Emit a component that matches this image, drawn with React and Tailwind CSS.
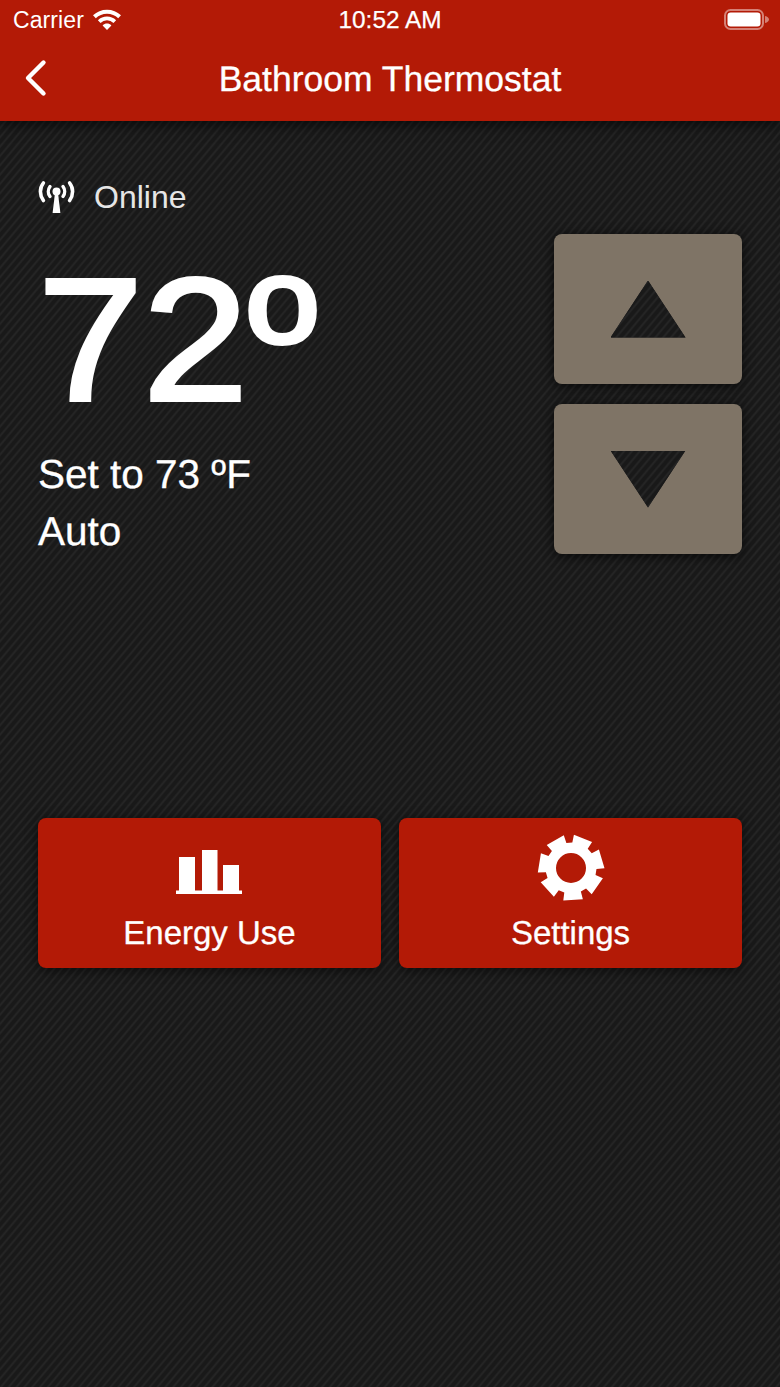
const RED = "bg-[#b31a06]";
const STRIPES = "bg-[#1c1c1c] bg-[repeating-linear-gradient(130deg,#191919_0px,#191919_2.5px,#252525_4px,#252525_4.5px,#191919_6px)]";

function gearPath() {
  const cx = 35, cy = 35, outer = 33.5, root = 25.5, hole = 15, teeth = 7, start = 22;
  const pts = [];
  const pt = (r, a) => {
    const t = ((a - 90) * Math.PI) / 180;
    return `${(cx + r * Math.cos(t)).toFixed(2)} ${(cy + r * Math.sin(t)).toFixed(2)}`;
  };
  for (let i = 0; i < teeth; i++) {
    const a = start + (i * 360) / teeth;
    pts.push(pt(root, a - 19), pt(outer, a - 17), pt(outer, a + 17), pt(root, a + 19));
  }
  const ring = `M${pts.join("L")}Z`;
  const h = `M${cx - hole} ${cy}a${hole} ${hole} 0 1 0 ${hole * 2} 0a${hole} ${hole} 0 1 0 ${-hole * 2} 0Z`;
  return ring + h;
}

function Wifi() {
  return (
    <svg width="28" height="22" viewBox="0 0 28 22" fill="none" className="block">
      <path d="M1.4 7.8C8.4 1 19.6 1 26.6 7.8" stroke="white" strokeWidth="4" />
      <path d="M6.2 12.6C10.6 8.4 17.4 8.4 21.8 12.6" stroke="white" strokeWidth="3.8" />
      <path d="M14 21L9.6 16.4C12.2 14 15.8 14 18.4 16.4Z" fill="white" />
    </svg>
  );
}

function Battery() {
  return (
    <svg width="46" height="22" viewBox="0 0 46 22" fill="none" className="block">
      <rect x="1" y="1" width="38" height="19" rx="5.5" stroke="white" strokeOpacity="0.45" strokeWidth="2" />
      <rect x="3.5" y="3.5" width="33" height="14" rx="3.2" fill="white" />
      <path d="M41 7C43.6 7.6 45 9 45 10.5C45 12 43.6 13.4 41 14Z" fill="white" fillOpacity="0.45" />
    </svg>
  );
}

function Antenna() {
  return (
    <svg width="40" height="34" viewBox="0 0 40 34" fill="none" className="block">
      <circle cx="19.5" cy="11.5" r="4" fill="white" />
      <path d="M18 13H21L23.4 33H15.6Z" fill="white" />
      <path d="M13 6.5C10.8 9.4 10.8 13.6 13 16.5" stroke="white" strokeWidth="3.4" strokeLinecap="round" />
      <path d="M26 6.5C28.2 9.4 28.2 13.6 26 16.5" stroke="white" strokeWidth="3.4" strokeLinecap="round" />
      <path d="M6.4 3C2.4 8 2.4 15 6.4 20.5" stroke="white" strokeWidth="3.6" strokeLinecap="round" />
      <path d="M32.6 3C36.6 8 36.6 15 32.6 20.5" stroke="white" strokeWidth="3.6" strokeLinecap="round" />
    </svg>
  );
}

function Bars() {
  return (
    <svg width="66" height="44" viewBox="0 0 66 44" className="block -ml-[1px]" fill="white">
      <rect x="3" y="7" width="16" height="34" />
      <rect x="26" y="0" width="15.5" height="41" />
      <rect x="47" y="15" width="16" height="26" />
      <rect x="0" y="40.5" width="66" height="3.5" />
    </svg>
  );
}

function Gear() {
  return (
    <svg width="70" height="70" viewBox="0 0 70 70" className="block">
      <path d={gearPath()} fill="white" fillRule="evenodd" />
    </svg>
  );
}

function StepButton({ clip }) {
  return (
    <button className="w-[188px] h-[150px] rounded-lg bg-[#7f7466] flex items-center justify-center shadow-[0_2px_12px_rgba(0,0,0,0.7)]">
      <div className={`w-[75px] h-[57px] ${STRIPES} ${clip}`} />
    </button>
  );
}

function ActionButton({ icon, label, iconClass }) {
  return (
    <button className={`flex-1 h-[150px] rounded-lg ${RED} flex flex-col items-center text-white shadow-[0_2px_12px_rgba(0,0,0,0.6)]`}>
      <div className={`h-[100px] flex items-center justify-center shrink-0 ${iconClass}`}>{icon}</div>
      <div className="text-[33px] leading-[36px] -mt-[3px] [-webkit-text-stroke:0.3px_white] [text-rendering:geometricPrecision]">{label}</div>
    </button>
  );
}

export default function App() {
  return (
    <div className={`w-[780px] h-[1387px] flex flex-col text-white font-['Liberation_Sans',Arial,sans-serif] ${STRIPES} overflow-hidden`}>
      <header className={`${RED} h-[121px] shrink-0 relative shadow-[0_4px_12px_rgba(0,0,0,0.6)]`}>
        <div className="h-[40px] px-[13px] flex items-center justify-between relative">
          <div className="flex items-center gap-[9px]">
            <span className="text-[23px] leading-none tracking-[0.1px]">Carrier</span>
            <Wifi />
          </div>
          <span className="text-[24.4px] leading-none absolute left-0 right-0 text-center [-webkit-text-stroke:0.25px_white]">10:52 AM</span>
          <div className="-mr-[3px] relative"><Battery /></div>
        </div>
        <div className="h-[81px] flex items-center justify-center relative -mt-[1px]">
          <svg width="26" height="38" viewBox="0 0 26 38" fill="none" className="absolute left-[22px] top-[20px]">
            <path d="M21.5 3.5L6 19L21.5 34.5" stroke="white" strokeWidth="4.4" strokeLinecap="round" strokeLinejoin="round" />
          </svg>
          <h1 className="text-[35.5px] leading-none font-normal [-webkit-text-stroke:0.3px_white] [text-rendering:geometricPrecision]">Bathroom Thermostat</h1>
        </div>
      </header>

      <main className="flex-1 px-[38px]">
        <div className="flex justify-between">
          <div>
            <div className="flex items-center gap-[17px] mt-[58px] -ml-[1px]">
              <Antenna />
              <span className="text-[32px] leading-[36px] text-[#e6e6e6]">Online</span>
            </div>
            <div className="text-[174px] leading-none mt-[38px] origin-left scale-x-[1.085] [-webkit-text-stroke:4px_white]">72º</div>
            <div className="text-[40.5px] leading-[57px] mt-[19px] [-webkit-text-stroke:0.3px_white] [text-rendering:geometricPrecision]">
              <div>Set to 73 ºF</div>
              <div>Auto</div>
            </div>
          </div>
          <div className="flex flex-col gap-[20px] mt-[113px]">
            <StepButton clip="[clip-path:polygon(50%_0,100%_100%,0_100%)]" />
            <StepButton clip="[clip-path:polygon(0_0,100%_0,50%_100%)]" />
          </div>
        </div>
        <div className="flex gap-[18px] mt-[258px]">
          <ActionButton icon={<Bars />} label="Energy Use" iconClass="pt-[8px]" />
          <ActionButton icon={<Gear />} label="Settings" />
        </div>
      </main>
    </div>
  );
}
